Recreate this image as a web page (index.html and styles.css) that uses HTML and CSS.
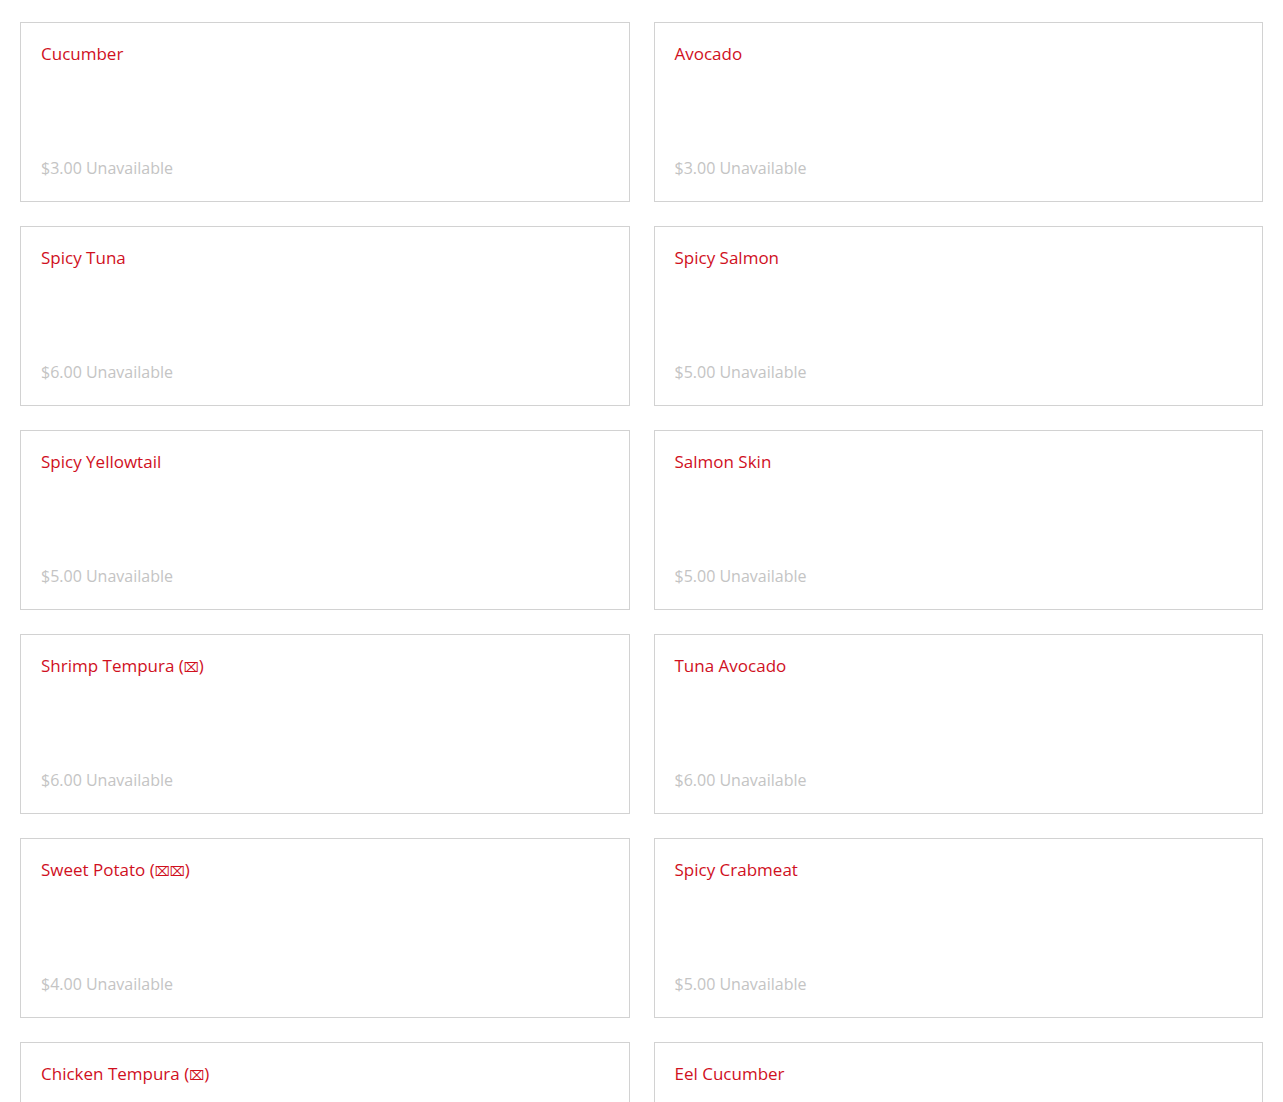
FILE: index.html
```html
<html>
<head>
<title>Rolls</title>
<link rel="stylesheet" href="styles.css">
</head>
<body>
<div class="menu">
  <div class="item">
    <div class="name">Cucumber</div>
    <div class="price">$3.00 Unavailable</div>
  </div>
  <div class="item">
    <div class="name">Avocado</div>
    <div class="price">$3.00 Unavailable</div>
  </div>
  <div class="item">
    <div class="name">Spicy Tuna</div>
    <div class="price">$6.00 Unavailable</div>
  </div>
  <div class="item">
    <div class="name">Spicy Salmon</div>
    <div class="price">$5.00 Unavailable</div>
  </div>
  <div class="item">
    <div class="name">Spicy Yellowtail</div>
    <div class="price">$5.00 Unavailable</div>
  </div>
  <div class="item">
    <div class="name">Salmon Skin</div>
    <div class="price">$5.00 Unavailable</div>
  </div>
  <div class="item">
    <div class="name">Shrimp Tempura (<span class="box">⌧</span>)</div>
    <div class="price">$6.00 Unavailable</div>
  </div>
  <div class="item">
    <div class="name">Tuna Avocado</div>
    <div class="price">$6.00 Unavailable</div>
  </div>
  <div class="item">
    <div class="name">Sweet Potato (<span class="box">⌧⌧</span>)</div>
    <div class="price">$4.00 Unavailable</div>
  </div>
  <div class="item">
    <div class="name">Spicy Crabmeat</div>
    <div class="price">$5.00 Unavailable</div>
  </div>
  <div class="item">
    <div class="name">Chicken Tempura (<span class="box">⌧</span>)</div>
    <div class="price">$6.00 Unavailable</div>
  </div>
  <div class="item">
    <div class="name">Eel Cucumber</div>
    <div class="price">$6.00 Unavailable</div>
  </div>
</div>
</body>
</html>
```
FILE: styles.css
```css
body {
    margin: 0;
    background: #fff;
    font-family: "Open Sans", "Liberation Sans", sans-serif;
}

.menu {
    display: grid;
    grid-template-columns: 1fr 1fr;
    gap: 24px;
    padding: 22px 20px;
}

.item {
    height: 180px;
    box-sizing: border-box;
    border: 1px solid #d2d2d2;
    padding: 19px 20px 21px;
    display: flex;
    flex-direction: column;
    justify-content: space-between;
}

.name {
    color: #d0101e;
    font-size: 17px;
    line-height: 24px;
}

.price {
    color: #c4c4c4;
    font-size: 16px;
    line-height: 24px;
}

.box {
    font-family: "DejaVu Sans", sans-serif;
    font-size: 13px;
}
```
